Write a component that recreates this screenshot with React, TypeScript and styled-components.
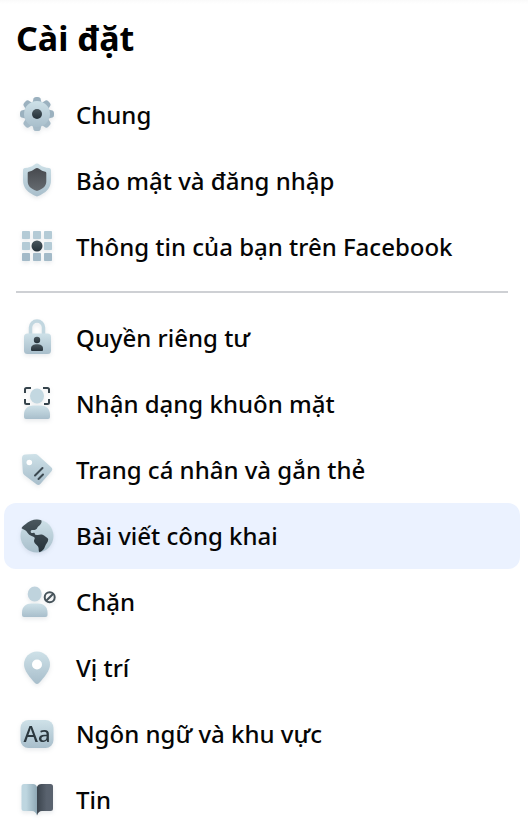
import React, { useState } from "react";
import styled, { createGlobalStyle } from "styled-components";

const GlobalStyle = createGlobalStyle`
  *, *::before, *::after { box-sizing: border-box; }
  body {
    margin: 0;
    background: #fff;
    color: #050505;
    font-family: "Noto Sans", "Open Sans", sans-serif;
  }
`;

const Sidebar = styled.aside`
  height: 100vh;
  overflow-y: auto;
  scrollbar-width: none;
  background: linear-gradient(#fafafa, #fff 4px);
`;

const Title = styled.h1`
  margin: 0;
  padding: 16px 16px 22px;
  font-size: 34px;
  line-height: 44px;
  font-weight: 700;
  color: #000;
`;

const Group = styled.ul`
  margin: 0;
  padding: 0 8px 0 4px;
  list-style: none;
`;

const Divider = styled.hr`
  height: 2px;
  margin: 11px 20px 12px 16px;
  border: 0;
  background: #ced0d4;
`;

const Row = styled.button<{ $selected: boolean }>`
  display: flex;
  align-items: center;
  gap: 19px;
  width: 100%;
  height: 66px;
  padding: 0 13px;
  border: 0;
  border-radius: 12px;
  background: ${(p) => (p.$selected ? "#ebf2ff" : "transparent")};
  color: inherit;
  font-family: inherit;
  font-size: 24px;
  line-height: 32px;
  font-weight: 500;
  text-align: left;
  white-space: nowrap;
  cursor: pointer;
`;

const Icon = styled.svg`
  flex: none;
  width: 40px;
  height: 40px;
  overflow: visible;
  filter: drop-shadow(0 2px 2px rgba(60, 80, 100, 0.12));
`;

const Glyphs = styled.text`
  font-family: "Noto Sans", sans-serif;
  font-size: 22px;
  font-weight: 500;
`;

const Gradients = styled.svg`
  position: absolute;
  width: 0;
  height: 0;
`;

const light = "url(#light)";
const dark = "url(#dark)";

const icons: Record<string, React.ReactNode> = {
  gear: (
    <>
      {[0, 45, 90, 135, 180, 225, 270, 315].map((angle) => (
        <path
          key={angle}
          d="M15.500 8l1-4.500Q17 2 19 2h2q2 0 2.500 1.500L24.500 8z"
          fill={angle > 90 && angle < 270 ? "#a5bac7" : "#9bb1bf"}
          transform={`rotate(${angle} 20 19)`}
        />
      ))}
      <circle cx="20" cy="19" r="13" fill={light} />
      <circle cx="20" cy="19" r="5" fill={dark} />
    </>
  ),
  shield: (
    <>
      <path
        d="M20 2.500c-1 0-1.800.5-2.700 1.300C14.500 6 11.500 6.700 8 7c-1.400.2-2 1-2 2.400v9.800C6 27 11 32 20 35.500 29 32 34 27 34 19.200V9.400C34 8 33.400 7.200 32 7c-3.500-.3-6.500-1-9.300-3.200C21.800 3 21 2.500 20 2.500z"
        fill={light}
      />
      <path
        d="M20 7q-1 0-2 .8c-2 1.700-4 2.500-6.200 2.900-.7.1-1.100.5-1.100 1.200v8.300c0 4.800 3.300 7.800 9.300 9.800 6-2 9.300-5 9.300-9.800v-8.300c0-.7-.4-1.100-1.100-1.200-2.200-.4-4.200-1.200-6.200-2.900Q21 7 20 7z"
        fill="url(#slate)"
      />
    </>
  ),
  grid: (
    <>
      {[4, 15, 26].map((y) =>
        [5, 16, 27].map((x) => (
          <rect key={`${x}-${y}`} x={x} y={y} width="8" height="8" rx="0.800" fill={y === 26 ? "#a3bac8" : "#b4cbd6"} />
        )),
      )}
      <circle cx="20" cy="19" r="5.500" fill={dark} />
    </>
  ),
  lock: (
    <>
      <path d="M13.500 17V9.500a6.500 6.500 0 0 1 13 0V17" fill="none" stroke="#c2d7e0" strokeWidth="3.500" />
      <rect x="7" y="15.500" width="27" height="20.500" rx="3.500" fill={light} />
      <circle cx="20" cy="22" r="3.200" fill={dark} />
      <path d="M14 32v-1.500c0-2.800 2.500-4.200 6-4.200s6 1.400 6 4.200V32q0 1-1 1H15q-1 0-1-1z" fill={dark} />
    </>
  ),
  face: (
    <>
      <ellipse cx="20" cy="12" rx="7" ry="7.500" fill="#c3d8e1" />
      <path d="M7 33v-2.500c0-6 4.500-9 9-9h8c4.500 0 9 3 9 9V33q0 2-2 2H9q-2 0-2-2z" fill={light} />
      <path
        d="M8 9V5.500Q8 4 9.500 4H14M26 4h4.500Q32 4 32 5.500V9M8 15v3.500Q8 20 9.500 20H13M27 20h3.500q1.500 0 1.500-1.500V15"
        fill="none"
        stroke="#36444c"
        strokeWidth="2"
      />
    </>
  ),
  tag: (
    <>
      <path
        d="M8.500 4.500 18 4q1.800 0 3 1.200l13.200 12q2 2 .3 4L23.300 34q-1.800 1.700-3.800.2L7.300 25Q6 24 5.800 22L5 8.500q-.2-3.700 3.500-4z"
        fill={light}
      />
      <circle cx="12.300" cy="12.500" r="2.800" fill="#fff" />
      <path d="M18 25.500l7.500-7.500M21.500 29l4.500-4.500" stroke="#3c4951" strokeWidth="2" strokeLinecap="round" />
    </>
  ),
  globe: (
    <>
      <circle cx="20" cy="20" r="16.500" fill={light} />
      <path
        d="M8.500 8.300C13 4 19 2.500 24.300 4.200c.8 1.800-.2 4.200-2.500 5.700-2 1.200-1 2.700-3.500 3.800-1.800.8-4.300-.5-4.600 1.500-.2 1.500 1 2.200 2.500 1.700.8-.3 1.700.2 1.700 1.300.3.900 1.700.4 2.800.9 2.300-1 5.300-1.200 7.300 1.100 1.300 1.500 3.400 1.300 3.200 3.600-.3 3-2.500 4.200-3.200 6.700-.8 2.800-2.700 4.500-5.500 5.800-1.300-.8-.4-3.800-1.300-5.500-1-2-3.900-3-4.200-5.500-.2-1.500 1.200-2.700.5-3.800-1-1.500-3.500-1.300-5.300-2.800-1.700-1.300-2-3.200-4-4.400-1.300-.8-2.500-1.300-3.700-2 .5-1.600 2-2.300 4-4z"
        fill={dark}
      />
    </>
  ),
  blocked: (
    <>
      <ellipse cx="17.700" cy="12" rx="7" ry="7.500" fill="#bfd3dd" />
      <path d="M5 33v-2.500c0-6 4.500-9 9-9h7.500c4.500 0 9 3 9 9V33q0 2-2 2H7q-2 0-2-2z" fill={light} />
      <g fill="none" stroke="#46535a" strokeWidth="2">
        <circle cx="32.700" cy="15.200" r="5" />
        <path d="M29.200 18.700l7-7" />
      </g>
    </>
  ),
  pin: (
    <>
      <path
        d="M20 3.500A13 13 0 0 0 7 16.500c0 6 5.500 12.700 11.200 18.700q1.800 1.600 3.600 0C27.500 29.200 33 22.500 33 16.500a13 13 0 0 0-13-13z"
        fill={light}
      />
      <circle cx="20" cy="16.500" r="5" fill="#fff" />
    </>
  ),
  language: (
    <>
      <rect x="3.500" y="6" width="33" height="28" rx="8" fill={light} />
      <Glyphs x="20" y="28" textAnchor="middle" fill="#2c383f">
        Aa
      </Glyphs>
    </>
  ),
  book: (
    <>
      <path d="M7 4h9q3 0 4 3v28.500c-1-3-2.500-4.500-5-4.500H7q-2.500 0-2.500-2.500v-22Q4.500 4 7 4z" fill="url(#page)" />
      <path d="M33.500 4h-9q-3.500 0-4.500 3v28.500c1-3 2.500-4.500 5-4.500h8.500q2.500 0 2.500-2.500v-22Q36 4 33.500 4z" fill="url(#cover)" />
    </>
  ),
};

const groups = [
  [
    { icon: "gear", label: "Chung" },
    { icon: "shield", label: "Bảo mật và đăng nhập" },
    { icon: "grid", label: "Thông tin của bạn trên Facebook" },
  ],
  [
    { icon: "lock", label: "Quyền riêng tư" },
    { icon: "face", label: "Nhận dạng khuôn mặt" },
    { icon: "tag", label: "Trang cá nhân và gắn thẻ" },
    { icon: "globe", label: "Bài viết công khai" },
    { icon: "blocked", label: "Chặn" },
    { icon: "pin", label: "Vị trí" },
    { icon: "language", label: "Ngôn ngữ và khu vực" },
    { icon: "book", label: "Tin" },
  ],
];

export default function App() {
  const [selected, setSelected] = useState("globe");
  return (
    <Sidebar>
      <GlobalStyle />
      <Gradients aria-hidden="true">
        <defs>
          <linearGradient id="light" x1="0" y1="0" x2="0" y2="1">
            <stop offset="0" stopColor="#cee1e8" />
            <stop offset="1" stopColor="#a8becb" />
          </linearGradient>
          <linearGradient id="dark" x1="0" y1="0" x2="0" y2="1">
            <stop offset="0" stopColor="#4a575e" />
            <stop offset="1" stopColor="#253139" />
          </linearGradient>
          <linearGradient id="slate" x1="0" y1="0" x2="0" y2="1">
            <stop offset="0" stopColor="#46494e" />
            <stop offset="1" stopColor="#666b70" />
          </linearGradient>
          <linearGradient id="page">
            <stop offset="0.300" stopColor="#bed6e0" />
            <stop offset="1" stopColor="#8fa8b5" />
          </linearGradient>
          <linearGradient id="cover">
            <stop offset="0" stopColor="#3b444d" />
            <stop offset="0.600" stopColor="#59626e" />
          </linearGradient>
        </defs>
      </Gradients>
      <Title>Cài đặt</Title>
      <nav aria-label="Cài đặt">
        {groups.map((items, index) => (
          <React.Fragment key={index}>
            {index > 0 && <Divider />}
            <Group>
              {items.map(({ icon, label }) => (
                <li key={icon}>
                  <Row
                    type="button"
                    $selected={selected === icon}
                    aria-current={selected === icon ? "page" : undefined}
                    onClick={() => setSelected(icon)}
                  >
                    <Icon viewBox="0 0 40 40" aria-hidden="true">
                      {icons[icon]}
                    </Icon>
                    {label}
                  </Row>
                </li>
              ))}
            </Group>
          </React.Fragment>
        ))}
      </nav>
    </Sidebar>
  );
}
